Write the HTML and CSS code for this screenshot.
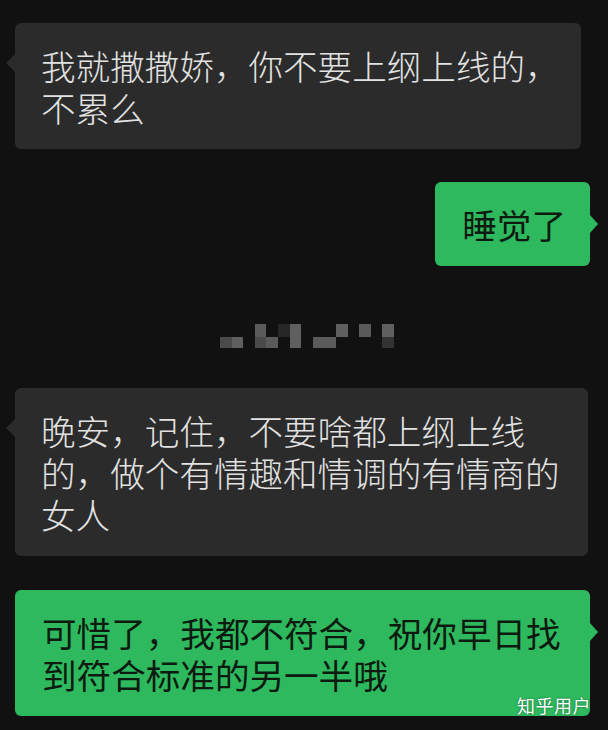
FILE: index.html
```html
<!DOCTYPE html>
<html lang="zh-CN">
<head>
<meta charset="utf-8">
<link rel="stylesheet" href="styles.css">
</head>
<body>
<div class="chat">
  <div class="bubble in b1">我就撒撒娇，你不要上纲上线的，不累么</div>
  <div class="bubble out b2">睡觉了</div>
  <div class="mosaic">
    <span></span><span></span><span></span><span class="g5a"></span><span></span><span class="d2a"></span><span class="g5e"></span><span></span><span></span><span></span><span class="g5e"></span><span></span><span class="g5a"></span><span></span><span class="g5e"></span>
    <span class="g4a"></span><span class="g5e"></span><span></span><span class="g4a"></span><span class="g5a"></span><span></span><span class="g5e"></span><span></span><span class="g5a"></span><span class="g5a"></span><span></span><span></span><span></span><span></span><span class="d33"></span>
  </div>
  <div class="bubble in b3">晚安，记住，不要啥都上纲上线的，做个有情趣和情调的有情商的女人</div>
  <div class="bubble out b4">可惜了，我都不符合，祝你早日找到符合标准的另一半哦</div>
</div>
<div class="watermark">知乎用户</div>
</body>
</html>
```

FILE: styles.css
```css
html, body {
  margin: 0;
  padding: 0;
}
body {
  background: #111111;
  width: 608px;
  height: 730px;
  overflow: hidden;
  position: relative;
  font-family: "Noto Sans CJK SC", "Noto Sans", sans-serif;
}
.chat {
  display: flex;
  flex-direction: column;
  padding: 23px 18px 0 15px;
}
.bubble {
  position: relative;
  font-size: 34.6px;
  font-weight: 300;
  line-height: 42px;
  border-radius: 6px;
  padding: 21px 19px 21px 26px;
  width: fit-content;
  box-sizing: border-box;
}
.in {
  align-self: flex-start;
  background: #2b2b2b;
  color: #e2e2e2;
  max-width: 573px;
}
.in::before {
  content: "";
  position: absolute;
  left: -9px;
  top: 31px;
  border-right: 9px solid #2b2b2b;
  border-top: 9px solid transparent;
  border-bottom: 9px solid transparent;
}
.out {
  align-self: flex-end;
  background: #2eb95e;
  color: #0c1a10;
  font-weight: 400;
  max-width: 575px;
  padding: 21px 24px 21px 27px;
}
.out::after {
  content: "";
  position: absolute;
  right: -8px;
  top: 33px;
  border-left: 8px solid #2eb95e;
  border-top: 9px solid transparent;
  border-bottom: 9px solid transparent;
}
.b1 {
  max-width: 566px;
}
.b2 {
  margin-top: 33px;
}
.mosaic {
  margin: 58px 0 0 205px;
  display: grid;
  grid-template-columns: repeat(15, 11.6px);
  grid-template-rows: 13px 11px;
}
.mosaic .g5a { background: #5a5a5a; }
.mosaic .g5e { background: #5f5f5f; }
.mosaic .g4a { background: #4a4a4a; }
.mosaic .d2a { background: #262626; }
.mosaic .d33 { background: #333333; }
.b3 {
  margin-top: 40px;
}
.b4 {
  margin-top: 34px;
}
.watermark {
  position: absolute;
  left: 517px;
  top: 694px;
  font-size: 18px;
  line-height: 22px;
  color: #ffffff;
  letter-spacing: 0.5px;
  text-shadow: 0 0 2px rgba(0, 0, 0, 0.5);
}
```
